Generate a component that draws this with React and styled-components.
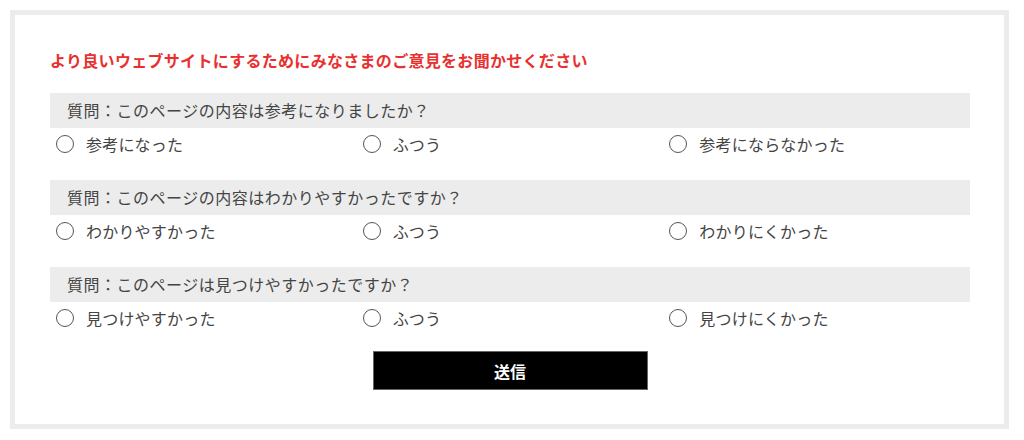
import React from 'react'
import styled, { createGlobalStyle } from 'styled-components'

const GlobalStyle = createGlobalStyle`
  body {
    margin: 0;
    background: #fff;
    font-family: "Noto Sans CJK JP", "Noto Sans", sans-serif;
  }
`

const Frame = styled.form`
  box-sizing: border-box;
  margin: 10px;
  width: 999px;
  height: 419px;
  border: 5px solid #ececec;
  padding: 33px 34px 0 35px;
`

const Heading = styled.p`
  margin: 0 0 21px;
  font-size: 16px;
  line-height: 24px;
  letter-spacing: 0.3px;
  font-weight: 700;
  color: #e8312f;
`

const Block = styled.div`
  margin-bottom: 20px;
`

const Question = styled.div`
  height: 35px;
  line-height: 35px;
  padding-left: 17px;
  background: #ececec;
  font-size: 16px;
  letter-spacing: 0.5px;
  color: #444;
`

const Options = styled.div`
  display: grid;
  grid-template-columns: repeat(3, 1fr);
  height: 32px;
  align-items: center;
`

const Option = styled.label`
  display: flex;
  align-items: center;
  padding-left: 6px;
  font-size: 16px;
  letter-spacing: 0.2px;
  color: #444;
  cursor: pointer;
`

const Radio = styled.span`
  box-sizing: border-box;
  width: 18px;
  height: 18px;
  border: 1.5px solid #555;
  border-radius: 50%;
  margin-right: 12px;
  flex: 0 0 auto;
`

const Footer = styled.div`
  display: flex;
  justify-content: center;
  margin-top: -3px;
`

const Submit = styled.button`
  box-sizing: border-box;
  width: 275px;
  height: 39px;
  background: #000;
  border: 1px solid #666;
  color: #fff;
  font-family: inherit;
  font-size: 16px;
  font-weight: 700;
`

const questions = [
  {
    text: '質問：このページの内容は参考になりましたか？',
    options: ['参考になった', 'ふつう', '参考にならなかった'],
  },
  {
    text: '質問：このページの内容はわかりやすかったですか？',
    options: ['わかりやすかった', 'ふつう', 'わかりにくかった'],
  },
  {
    text: '質問：このページは見つけやすかったですか？',
    options: ['見つけやすかった', 'ふつう', '見つけにくかった'],
  },
]

export default function App() {
  return (
    <>
      <GlobalStyle />
      <Frame onSubmit={(e) => e.preventDefault()}>
        <Heading>より良いウェブサイトにするためにみなさまのご意見をお聞かせください</Heading>
        {questions.map((q) => (
          <Block key={q.text}>
            <Question>{q.text}</Question>
            <Options>
              {q.options.map((o) => (
                <Option key={o}>
                  <Radio />
                  {o}
                </Option>
              ))}
            </Options>
          </Block>
        ))}
        <Footer>
          <Submit type="submit">送信</Submit>
        </Footer>
      </Frame>
    </>
  )
}
